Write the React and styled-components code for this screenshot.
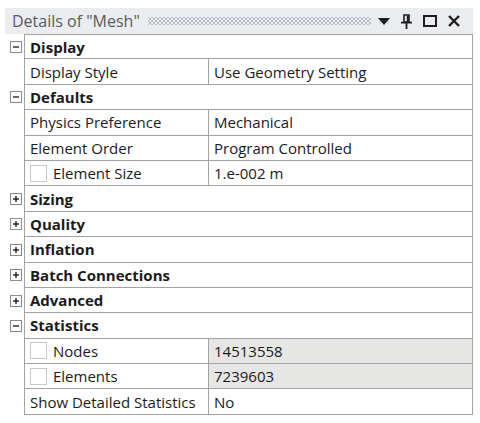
import React from "react";
import styled, { createGlobalStyle } from "styled-components";

const COLORS = {
  LINE: "#a3a3a3",
  TEXT: "#1b1b1b",
  TITLE_BG: "#eaecef",
  TITLE_TEXT: "#5b5b5b",
  READONLY: "#e6e6e4",
  GRIP: "#b9bcc2"
};

const GlobalStyle = createGlobalStyle`
  body {
    margin: 0;
    background: #ffffff;
    font-family: "Open Sans", "Noto Sans", sans-serif;
  }
`;

const Panel = styled.div`
  width: 468px;
  margin: 8px 0 0 5px;
`;

const TitleBar = styled.div`
  display: flex;
  align-items: center;
  height: 26px;
  padding: 0 13px 0 7px;
  background: ${COLORS.TITLE_BG};
  color: ${COLORS.TITLE_TEXT};
  font-size: 16px;
`;

const Title = styled.span`
  white-space: nowrap;
`;

const Grip = styled.div`
  flex: 1;
  height: 8px;
  margin: 0 7px 0 8px;
  background-image: radial-gradient(circle, ${COLORS.GRIP} 0.7px, transparent 1px),
    radial-gradient(circle, ${COLORS.GRIP} 0.7px, transparent 1px);
  background-size: 4px 4px;
  background-position: 0 0, 2px 2px;
`;

const Tools = styled.div`
  display: flex;
  align-items: center;
  gap: 11px;
  color: #1e1e1e;
`;

const Table = styled.div`
  display: flex;
  flex-direction: column;
`;

const Row = styled.div`
  display: flex;
  height: 25.4px;
`;

const Gutter = styled.div`
  width: 19px;
  display: flex;
  align-items: center;
  justify-content: center;
  padding-left: 2px;
  box-sizing: border-box;
`;

const Cells = styled.div`
  flex: 1;
  display: flex;
  border-left: 1px solid ${COLORS.LINE};
  border-right: 1px solid ${COLORS.LINE};
  border-bottom: 1px solid ${COLORS.LINE};
  border-top: ${(p) => (p.$first ? `1px solid ${COLORS.LINE}` : "none")};
  box-sizing: border-box;
`;

const Cell = styled.div`
  display: flex;
  align-items: center;
  gap: 6px;
  padding-left: 5px;
  font-size: 15px;
  color: ${COLORS.TEXT};
  white-space: nowrap;
  overflow: hidden;
  box-sizing: border-box;
  font-weight: ${(p) => (p.$bold ? 700 : 400)};
  width: ${(p) => (p.$name ? "184px" : "auto")};
  flex: ${(p) => (p.$name ? "none" : "1")};
  border-right: ${(p) => (p.$name ? `1px solid ${COLORS.LINE}` : "none")};
  background: ${(p) => (p.$readonly ? COLORS.READONLY : "transparent")};
`;

const Check = styled.span`
  width: 15px;
  height: 15px;
  border: 1px solid #c8c8c8;
  background: #fff;
  flex: none;
`;

const ExpanderBox = styled.span`
  width: 12px;
  height: 12px;
  border: 1px solid #8c8c8c;
  box-sizing: border-box;
  display: flex;
  align-items: center;
  justify-content: center;
  background: #fff;
`;

const Expander = ({ open }) => (
  <ExpanderBox>
    <svg width="8" height="8" viewBox="0 0 8 8">
      <path d="M1 4h6" stroke="#111" strokeWidth="1.3" />
      {!open && <path d="M4 1v6" stroke="#111" strokeWidth="1.3" />}
    </svg>
  </ExpanderBox>
);

const sections = [
  { title: "Display", open: true, rows: [{ name: "Display Style", value: "Use Geometry Setting" }] },
  {
    title: "Defaults",
    open: true,
    rows: [
      { name: "Physics Preference", value: "Mechanical" },
      { name: "Element Order", value: "Program Controlled" },
      { name: "Element Size", value: "1.e-002 m", check: true }
    ]
  },
  { title: "Sizing" },
  { title: "Quality" },
  { title: "Inflation" },
  { title: "Batch Connections" },
  { title: "Advanced" },
  {
    title: "Statistics",
    open: true,
    rows: [
      { name: "Nodes", value: "14513558", check: true, readonly: true },
      { name: "Elements", value: "7239603", check: true, readonly: true },
      { name: "Show Detailed Statistics", value: "No" }
    ]
  }
];

export default function App() {
  return (
    <>
      <GlobalStyle />
      <Panel>
        <TitleBar>
          <Title>Details of "Mesh"</Title>
          <Grip />
          <Tools>
            <svg width="12" height="7" viewBox="0 0 12 7">
              <path d="M0 0h12L6 7z" fill="#1e1e1e" />
            </svg>
            <svg width="11" height="15" viewBox="0 0 11 15">
              <path d="M3 1h5v7H3z" fill="none" stroke="#1e1e1e" strokeWidth="1.6" />
              <path d="M6.8 1.5v6.5" stroke="#1e1e1e" strokeWidth="2" />
              <path d="M0 8.6h11" stroke="#1e1e1e" strokeWidth="1.8" />
              <path d="M5.5 9v6" stroke="#1e1e1e" strokeWidth="1.8" />
            </svg>
            <svg width="14" height="12" viewBox="0 0 14 12">
              <rect x="1" y="1" width="12" height="10" fill="none" stroke="#1e1e1e" strokeWidth="2" />
            </svg>
            <svg width="12" height="12" viewBox="0 0 12 12">
              <path d="M1 1l10 10M11 1L1 11" stroke="#1e1e1e" strokeWidth="2.4" />
            </svg>
          </Tools>
        </TitleBar>
        <Table>
          {sections.map((s, i) => (
            <React.Fragment key={s.title}>
              <Row>
                <Gutter>
                  <Expander open={s.open} />
                </Gutter>
                <Cells $first={i === 0}>
                  <Cell $bold>{s.title}</Cell>
                </Cells>
              </Row>
              {s.open &&
                s.rows.map((r) => (
                  <Row key={r.name}>
                    <Gutter />
                    <Cells>
                      <Cell $name>
                        {r.check && <Check />}
                        {r.name}
                      </Cell>
                      <Cell $readonly={r.readonly}>{r.value}</Cell>
                    </Cells>
                  </Row>
                ))}
            </React.Fragment>
          ))}
        </Table>
      </Panel>
    </>
  );
}
